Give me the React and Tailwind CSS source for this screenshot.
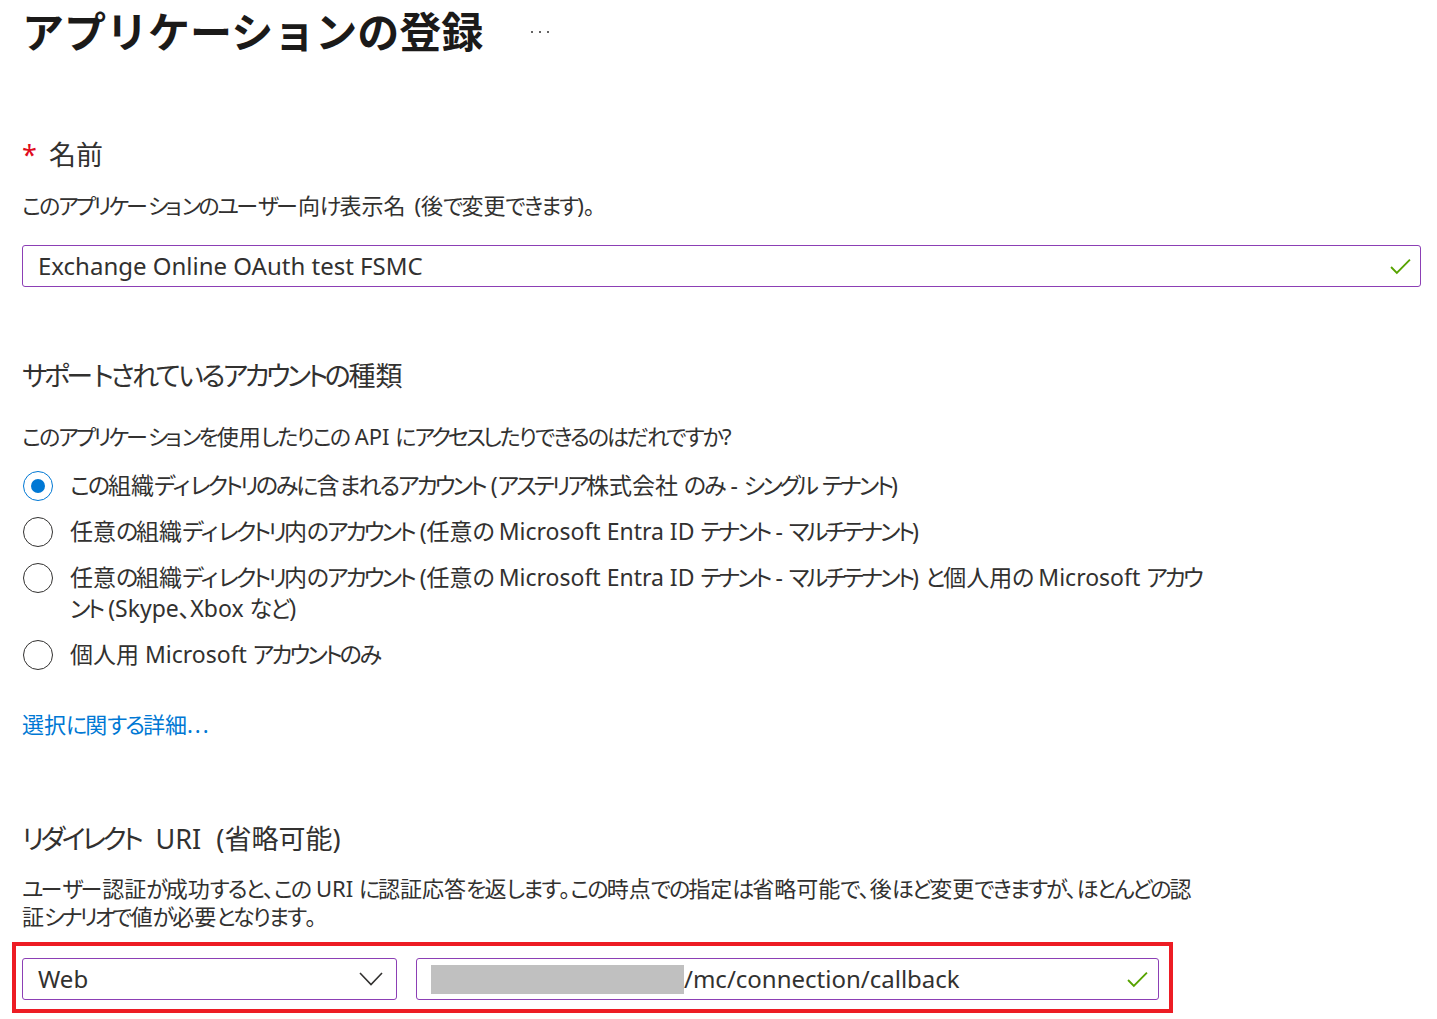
import React from "react";

const base = "font-['Noto_Sans','Noto_Sans_CJK_JP',sans-serif] [font-feature-settings:'palt']";

// Kana are set tighter than kanji and Latin, the way a UI Japanese face draws them:
// katakana narrowest, hiragana a little wider. Small kana and the long-vowel bar
// are already narrow, so they keep their own width. One span per kana keeps wrapping natural.
const KATA = /[\u30a0-\u30ff]/;
const HIRA = /[\u3040-\u309f]/;
const KEEP = /[ーァィゥェォッャュョヮぁぃぅぇぉっゃゅょ・]/;

function T({ children }) {
  const chars = Array.from(String(children));
  const out = [];
  let plain = "";
  const flush = () => {
    if (plain) {
      out.push(plain);
      plain = "";
    }
  };
  chars.forEach((c, i) => {
    if (KEEP.test(c)) {
      plain += c;
    } else if (KATA.test(c)) {
      flush();
      out.push(
        <span key={i} className="tracking-[-0.13em]">
          {c}
        </span>
      );
    } else if (HIRA.test(c)) {
      flush();
      out.push(
        <span key={i} className="tracking-[-0.09em]">
          {c}
        </span>
      );
    } else {
      plain += c;
    }
  });
  flush();
  return <>{out}</>;
}

function Check({ className = "" }) {
  return (
    <svg viewBox="0 0 20 16" className={className} fill="none">
      <path d="M1 8.5 L6.5 14 L19 1.5" stroke="#57a300" strokeWidth="1.8" />
    </svg>
  );
}

function Radio({ checked, text }) {
  return (
    <div className="flex items-start">
      <div className="flex h-[31px] w-[48px] shrink-0 items-center">
        {checked ? (
          <span className="ml-[1px] flex h-[30px] w-[30px] items-center justify-center rounded-full border-[1.5px] border-[#0078d4]">
            <span className="h-[14px] w-[14px] rounded-full bg-[#0078d4]" />
          </span>
        ) : (
          <span className="ml-[1px] h-[30px] w-[30px] rounded-full border-[1.5px] border-[#323130]" />
        )}
      </div>
      <div className="max-w-[1140px] text-[23px] leading-[31px] text-[#323130]">
        <T>{text}</T>
      </div>
    </div>
  );
}

export default function App() {
  return (
    <div className={`${base} min-h-[1019px] w-full bg-white pl-[22px] pr-[16px] text-[#323130]`}>
      {/* page title */}
      <div className="flex h-[60px] items-center">
        <h1 className="font-['Noto_Sans_CJK_JP',sans-serif] text-[42px] font-bold leading-[60px] text-[#1b1a19] [font-feature-settings:normal]">
          アプリケーションの登録
        </h1>
        <span className="ml-[48px] mt-[4px] flex gap-[6px]">
          <span className="h-[2px] w-[2px] rounded-full bg-[#323130]" />
          <span className="h-[2px] w-[2px] rounded-full bg-[#323130]" />
          <span className="h-[2px] w-[2px] rounded-full bg-[#323130]" />
        </span>
      </div>

      {/* name */}
      <div className="mt-[77px] flex h-[36px] items-center text-[27px] leading-[36px]">
        <span className="mr-[12px] text-[#e00b1c]">*</span>
        <span>名前</span>
      </div>
      <p className="mt-[17px] text-[22px] leading-[30px] [word-spacing:0.15em]">
        <T>このアプリケーションのユーザー向け表示名 (後で変更できます)。</T>
      </p>
      <div className="mt-[25px] flex h-[42px] items-center rounded-[3px] border border-[#8c3fb5] pl-[15px] pr-[9px]">
        <span className="flex-1 text-[24px]">Exchange Online OAuth test FSMC</span>
        <Check className="h-[17px] w-[21px]" />
      </div>

      {/* supported account types */}
      <h2 className="mt-[71px] text-[27px] leading-[36px]">
        <T>サポートされているアカウントの種類</T>
      </h2>
      <p className="mt-[27px] text-[22px] leading-[30px]">
        <T>このアプリケーションを使用したりこの API にアクセスしたりできるのはだれですか?</T>
      </p>
      <div className="mt-[19px] flex flex-col gap-[15px]">
        <Radio checked text="この組織ディレクトリのみに含まれるアカウント (アステリア株式会社 のみ - シングル テナント)" />
        <Radio text="任意の組織ディレクトリ内のアカウント (任意の Microsoft Entra ID テナント - マルチテナント)" />
        <Radio text="任意の組織ディレクトリ内のアカウント (任意の Microsoft Entra ID テナント - マルチテナント) と個人用の Microsoft アカウント (Skype、Xbox など)" />
        <Radio text="個人用 Microsoft アカウントのみ" />
      </div>
      <a className="mt-[39px] block text-[22px] leading-[30px] text-[#0078d4]">
        <T>選択に関する詳細</T>
        <span className="tracking-[2px]">...</span>
      </a>

      {/* redirect uri */}
      <h2 className="mt-[82px] text-[27px] leading-[36px] [word-spacing:0.3em]">
        <T>リダイレクト URI (省略可能)</T>
      </h2>
      <p className="mt-[17px] max-w-[1185px] text-[22px] leading-[28px]">
        <T>ユーザー認証が成功すると、この URI に認証応答を返します。この時点での指定は省略可能で、後ほど変更できますが、ほとんどの認証シナリオで値が必要となります。</T>
      </p>
      <div className="-ml-[10px] mt-[12px] w-[1161px] border-4 border-[#ed1c24] pb-[9px] pl-[6px] pr-[10px] pt-[12px]">
        <div className="flex gap-[19px]">
          <div className="flex h-[42px] w-[375px] items-center rounded-[3px] border border-[#8c3fb5] pl-[15px] pr-[13px]">
            <span className="flex-1 text-[24px]">Web</span>
            <svg viewBox="0 0 24 14" className="h-[14px] w-[24px]" fill="none">
              <path d="M1 1 L12 12.5 L23 1" stroke="#323130" strokeWidth="1.6" />
            </svg>
          </div>
          <div className="flex h-[42px] flex-1 items-center rounded-[3px] border border-[#8c3fb5] pl-[14px] pr-[10px]">
            <span className="h-[29px] w-[253px] bg-[#c0c0c0]" />
            <span className="flex-1 text-[24px]">/mc/connection/callback</span>
            <Check className="h-[17px] w-[21px]" />
          </div>
        </div>
      </div>
    </div>
  );
}
